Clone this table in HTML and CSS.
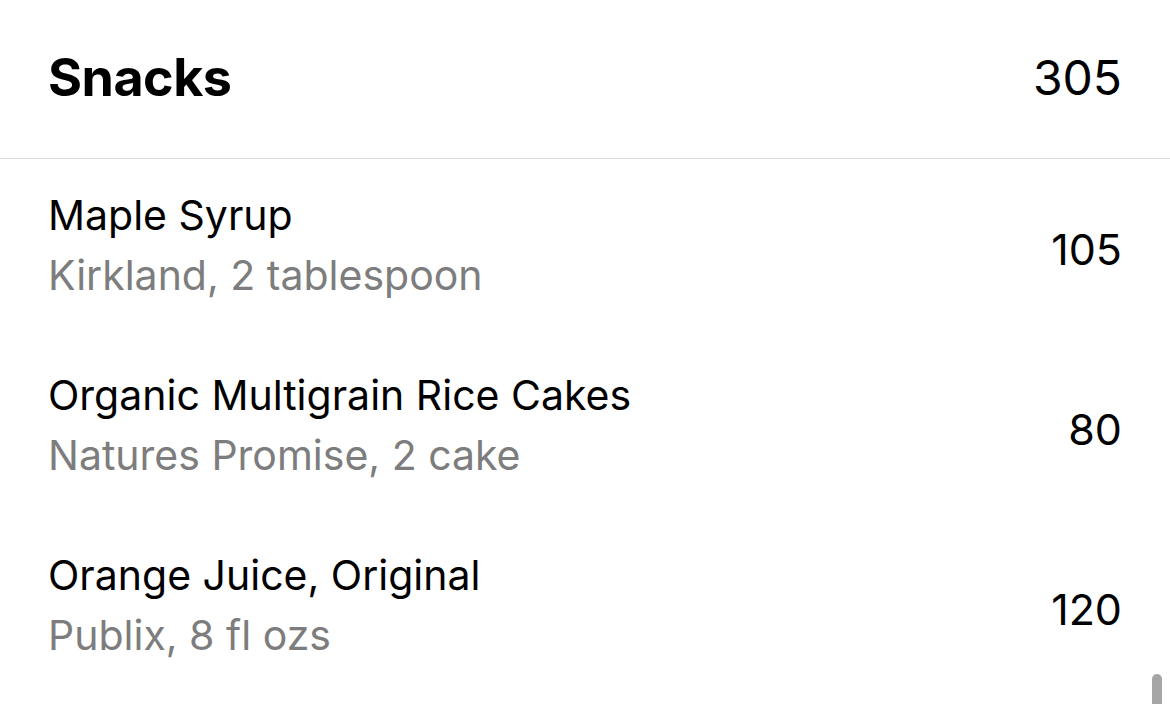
FILE: index.html
```html
<!DOCTYPE html>
<html>
<head>
<meta charset="utf-8">
<link rel="stylesheet" href="styles.css">
</head>
<body>
<div class="screen">
  <header class="section-header">
    <h1 class="section-title">Snacks</h1>
    <span class="section-total">305</span>
  </header>
  <ul class="food-list">
    <li class="food-row">
      <div class="food-info">
        <span class="food-name">Maple Syrup</span>
        <span class="food-detail">Kirkland, 2 tablespoon</span>
      </div>
      <span class="food-cal">105</span>
    </li>
    <li class="food-row">
      <div class="food-info">
        <span class="food-name">Organic Multigrain Rice Cakes</span>
        <span class="food-detail">Natures Promise, 2 cake</span>
      </div>
      <span class="food-cal">80</span>
    </li>
    <li class="food-row">
      <div class="food-info">
        <span class="food-name">Orange Juice, Original</span>
        <span class="food-detail">Publix, 8 fl ozs</span>
      </div>
      <span class="food-cal">120</span>
    </li>
  </ul>
  <div class="scroll-indicator"></div>
</div>
</body>
</html>
```
FILE: styles.css
```css
html, body {
  margin: 0;
  padding: 0;
  background: #ffffff;
}
body {
  font-family: Inter, "Noto Sans", "Liberation Sans", sans-serif;
  color: #000;
  width: 1170px;
  height: 704px;
  overflow: hidden;
}
.screen {
  position: relative;
  width: 1170px;
  height: 704px;
}
.section-header {
  display: flex;
  align-items: center;
  justify-content: space-between;
  height: 159px;
  padding: 0 48px 4px 48px;
  box-sizing: border-box;
  border-bottom: 1px solid #d9d9d9;
}
.section-title {
  margin: 0;
  font-size: 52px;
  font-weight: 700;
  letter-spacing: -0.5px;
}
.section-total {
  font-size: 48px;
  font-weight: 400;
}
.food-list {
  list-style: none;
  margin: 0;
  padding: 0;
}
.food-row {
  display: flex;
  align-items: center;
  justify-content: space-between;
  height: 180px;
  padding: 0 48px;
  box-sizing: border-box;
}
.food-info {
  display: flex;
  flex-direction: column;
  padding-bottom: 8px;
}
.food-name {
  font-size: 41px;
  line-height: 60px;
}
.food-detail {
  font-size: 41px;
  line-height: 60px;
  color: #7d7d7d;
}
.food-cal {
  font-size: 43px;
}
.scroll-indicator {
  position: absolute;
  right: 8px;
  top: 674px;
  width: 10px;
  height: 40px;
  border-radius: 5px;
  background: #a6a6a6;
}
```
